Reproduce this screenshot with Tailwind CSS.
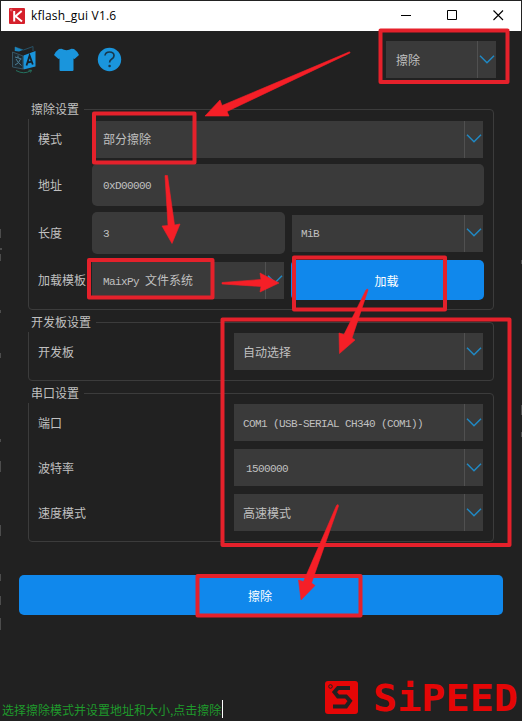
<!DOCTYPE html>
<html lang="zh-CN">
<head>
<meta charset="utf-8">
<title>kflash_gui V1.6</title>
<script src="https://cdn.jsdelivr.net/npm/@tailwindcss/browser@4"></script>
</head>
<body class="bg-[#212121]">
<svg class="hidden">
  <symbol id="chev" viewBox="0 0 16 10"><path d="M1 .7 L8 7.700 L15 .7" fill="none" stroke="#2089c4" stroke-width="1.5"/></symbol>
</svg>
<div class="relative w-[522px] h-[721px] overflow-hidden flex flex-col bg-[#212121] text-[#c0c0c0] text-[12px] leading-[16px] font-['Liberation_Mono','Noto_Sans_CJK_SC',monospace]">

  <!-- title bar -->
  <header class="h-[31px] shrink-0 border-t border-x border-[#222] bg-white flex items-center text-black">
    <svg class="ml-[8px] mb-[1px] w-[16px] h-[16px]" viewBox="0 0 16 16"><rect width="16" height="16" rx="1" fill="#d5202b"/><path d="M5.2 3V13.5M12.7 3L6.5 8.2L13 13.5" fill="none" stroke="#fff" stroke-width="2"/><circle cx="2.2" cy="2" r=".9" fill="none" stroke="#f4a0a4" stroke-width=".6"/></svg>
    <span class="ml-[6px] text-[12px] font-['Open_Sans',sans-serif] tracking-[0.2px] whitespace-nowrap">kflash_gui V1.6</span>
    <div class="ml-auto mr-[17px] mb-[2px] flex items-center gap-[35px]">
      <svg class="w-[11px] h-[11px]" viewBox="0 0 11 11"><path d="M0 5.5H10" stroke="#000"/></svg>
      <svg class="w-[11px] h-[11px]" viewBox="0 0 11 11"><path d="M.5 .5H9.5V9.5H.5Z" fill="none" stroke="#000"/></svg>
      <svg class="w-[11px] h-[11px]" viewBox="0 0 11 11"><path d="M.5 .5L10 10M10 .5L.5 10" stroke="#000" stroke-width="1.1"/></svg>
    </div>
  </header>

  <!-- toolbar -->
  <div class="h-[78px] shrink-0 flex items-start pl-[11px] pr-[26px]">
    <svg class="mt-[14px] w-[26px] h-[29px]" viewBox="0 0 26 29">
      <path d="M4 6V2L12.500 5L22 1.500V6" fill="none" stroke="#28566c" stroke-width=".9"/>
      <path d="M4 2L12 5L8 6.500L4 6Z" fill="#1a84be"/>
      <path d="M1.500 7L12 11V24L1.500 22Z" fill="#1f2a30" stroke="#3d6172" stroke-width=".8"/>
      <path d="M12.500 10.500L24.500 6V21.500L12.500 24.500Z" fill="#1a95dc"/>
      <path d="M4 12L10.500 14M7 10.500V13M9.500 14Q8 18.500 4 20M5 14Q7 18 10.500 20.500" stroke="#4d7e95" fill="none"/>
      <path d="M15.500 20.500L18.600 10.500L21.800 19.500M16.500 17.500L21 16.700" stroke="#16222a" stroke-width="1.800" fill="none"/>
      <path d="M5 25.500Q13 30 20 25.500M17.500 25.200L20.500 25.200L19.500 27.500" stroke="#24725f" fill="none"/>
    </svg>
    <svg class="mt-[17px] ml-[17px] w-[25px] h-[24px]" viewBox="0 0 25 24"><path d="M7.500 .8Q12.500 3.500 17.500 .8L20 1Q23 3 25 7L20.500 11L19.500 10.500V22Q19.500 23 18.500 23H6.500Q5.500 23 5.500 22V10.500L4.500 11L0 7Q2 3 5 1Z" fill="#1a95dc"/></svg>
    <svg class="mt-[16px] ml-[18px] w-[25px] h-[25px]" viewBox="0 0 25 25"><circle cx="12.500" cy="12.500" r="11.700" fill="#1a95dc"/><path d="M8 8.500Q8.500 5 12.500 5Q17 5 17 8.700Q17 10.700 14.500 12.200Q12.600 13.300 12.600 15.500" fill="none" stroke="#17384d" stroke-width="1.700"/><circle cx="12.600" cy="19" r="1.300" fill="#17384d"/></svg>
    <div class="ml-auto mt-[10px] w-[110px] h-[37px] bg-[#3a3a3a] flex items-center">
      <span class="pl-[10px] pt-[4px] flex-1">擦除</span>
      <span class="w-[19px] h-full border-l border-[#505050] flex items-center justify-center"><svg class="w-[16px] h-[10px]"><use href="#chev"/></svg></span>
    </div>
  </div>

  <!-- erase settings -->
  <section class="relative mx-[28px] w-[466px] h-[201px] shrink-0 border border-[#3c3c3c] rounded-[4px] pl-[9px] pr-[9px] pt-[10px]">
    <h2 class="absolute left-[-1px] top-[-9px] h-[18px] bg-[#212121] pl-[3px] pr-[5px] pt-[2px]">擦除设置</h2>
    <div class="h-[38px] flex items-center">
      <span class="w-[54px] pt-[3px] shrink-0">模式</span>
      <div class="w-[391px] h-[37px] bg-[#3a3a3a] flex items-center"><span class="pl-[11px] pt-[4px] flex-1">部分擦除</span><span class="w-[19px] h-full border-l border-[#505050] flex items-center justify-center"><svg class="w-[16px] h-[10px]"><use href="#chev"/></svg></span></div>
    </div>
    <div class="mt-[6px] h-[42px] flex items-center">
      <span class="w-[54px] pt-[3px] shrink-0">地址</span>
      <div class="w-[392px] h-[42px] rounded-[5px] bg-[#3a3a3a] flex items-center pl-[11px] pt-[1px] text-[11px] tracking-[-0.6px]">0xD00000</div>
    </div>
    <div class="mt-[6px] h-[42px] flex items-center">
      <span class="w-[54px] pt-[3px] shrink-0">长度</span>
      <div class="w-[193px] h-[42px] rounded-[5px] bg-[#3a3a3a] flex items-center pl-[11px] pt-[1px] text-[11px]">3</div>
      <div class="ml-[7px] w-[191px] h-[37px] bg-[#3a3a3a] flex items-center"><span class="pl-[9px] pt-[2px] flex-1 text-[11px] tracking-[-0.6px]">MiB</span><span class="w-[19px] h-full border-l border-[#505050] flex items-center justify-center"><svg class="w-[16px] h-[10px]"><use href="#chev"/></svg></span></div>
    </div>
    <div class="mt-[6px] h-[40px] flex items-center">
      <span class="w-[54px] pt-[4px] shrink-0 whitespace-nowrap">加载模板</span>
      <div class="w-[192px] h-[37px] bg-[#3a3a3a] flex items-center"><span class="pl-[11px] pt-[4px] flex-1 whitespace-nowrap"><span class="text-[11px] tracking-[-0.6px]">MaixPy </span>文件系统</span><span class="w-[19px] h-full border-l border-[#505050] flex items-center justify-center"><svg class="w-[16px] h-[10px]"><use href="#chev"/></svg></span></div>
      <button class="ml-[7px] w-[193px] h-[40px] rounded-[5px] bg-[#1088ec] text-white pt-[5px] pr-[2px]">加载</button>
    </div>
  </section>

  <!-- board settings -->
  <section class="relative mt-[12px] mx-[28px] w-[466px] h-[59px] shrink-0 border border-[#3c3c3c] rounded-[4px] px-[9px] pt-[10px]">
    <h2 class="absolute left-[-1px] top-[-9px] h-[18px] bg-[#212121] pl-[3px] pr-[5px] pt-[2px]">开发板设置</h2>
    <div class="h-[37px] flex items-center">
      <span class="w-[196px] pt-[4px] shrink-0">开发板</span>
      <div class="w-[249px] h-[37px] bg-[#3a3a3a] flex items-center"><span class="pl-[9px] pt-[4px] flex-1">自动选择</span><span class="w-[19px] h-full border-l border-[#505050] flex items-center justify-center"><svg class="w-[16px] h-[10px]"><use href="#chev"/></svg></span></div>
    </div>
  </section>

  <!-- serial settings -->
  <section class="relative mt-[12px] mx-[28px] w-[466px] h-[149px] shrink-0 border border-[#3c3c3c] rounded-[4px] px-[9px] pt-[10px] flex flex-col gap-[8px]">
    <h2 class="absolute left-[-1px] top-[-9px] h-[18px] bg-[#212121] pl-[3px] pr-[5px] pt-[2px]">串口设置</h2>
    <div class="h-[37px] flex items-center">
      <span class="w-[196px] pt-[4px] shrink-0">端口</span>
      <div class="w-[249px] h-[37px] bg-[#3a3a3a] flex items-center"><span class="pl-[9px] pt-[2px] flex-1 text-[11px] tracking-[-0.6px] whitespace-nowrap">COM1 (USB-SERIAL CH340 (COM1))</span><span class="w-[19px] h-full border-l border-[#505050] flex items-center justify-center"><svg class="w-[16px] h-[10px]"><use href="#chev"/></svg></span></div>
    </div>
    <div class="h-[37px] flex items-center">
      <span class="w-[196px] pt-[4px] shrink-0">波特率</span>
      <div class="w-[249px] h-[37px] bg-[#3a3a3a] flex items-center"><span class="pl-[12px] pt-[2px] flex-1 text-[11px] tracking-[-0.6px]">1500000</span><span class="w-[19px] h-full border-l border-[#505050] flex items-center justify-center"><svg class="w-[16px] h-[10px]"><use href="#chev"/></svg></span></div>
    </div>
    <div class="h-[37px] flex items-center">
      <span class="w-[196px] pt-[4px] shrink-0">速度模式</span>
      <div class="w-[249px] h-[37px] bg-[#3a3a3a] flex items-center"><span class="pl-[9px] pt-[4px] flex-1">高速模式</span><span class="w-[19px] h-full border-l border-[#505050] flex items-center justify-center"><svg class="w-[16px] h-[10px]"><use href="#chev"/></svg></span></div>
    </div>
  </section>

  <button class="mt-[33px] ml-[19px] w-[484px] h-[40px] shrink-0 rounded-[5px] bg-[#1088ec] text-white pt-[5px] pr-[2px]">擦除</button>

  <!-- status bar and logo -->
  <footer class="flex-1 flex items-end">
    <span class="ml-[2px] mb-[3px] h-[18px] pt-[2px] pr-[1px] border-r border-white text-[#1f9a2c] whitespace-nowrap font-['Noto_Sans_CJK_SC',sans-serif]">选择擦除模式并设置地址和大小,点击擦除</span>
    <svg class="ml-auto mr-[2px] w-[196px] h-[46px] overflow-visible" viewBox="0 -4 196 46">
      <rect x="1" y="2" width="33" height="33" rx="3" fill="#e50606"/>
      <path d="M26 9H14L10.500 13L14 17.500H22L26 22L22 27.500H9" fill="none" stroke="#212121" stroke-width="4"/>
      <circle cx="6.500" cy="7.500" r="1.800" fill="none" stroke="#212121"/>
      <text x="49" y="32" textLength="145" lengthAdjust="spacingAndGlyphs" font-family="DejaVu Sans Mono" font-weight="bold" font-size="37" fill="#e50606">SiPEED</text>
    </svg>
  </footer>

  <!-- annotations over the window -->
  <svg class="absolute inset-0 w-[522px] h-[721px] pointer-events-none" viewBox="0 0 522 721">
    <g fill="none" stroke="#e5212b" stroke-width="4" stroke-linejoin="round">
      <rect x="380.500" y="30.500" width="127" height="51.500"/>
      <rect x="94" y="113.500" width="100.500" height="49"/>
      <rect x="89" y="260" width="123.500" height="37.500"/>
      <rect x="294" y="257.500" width="151" height="52"/>
      <rect x="222.500" y="319.500" width="287" height="225.500"/>
      <rect x="197.500" y="576" width="163" height="39.500"/>
    </g>
    <g fill="#f51f27" stroke="#f51f27" stroke-width=".6" stroke-linejoin="round">
      <path d="M350 52.300L349.600 53.200L227 111.500L229 116L205 116L220 100L222 105.500L349.500 51.800Z"/>
      <path d="M165 175.500L167.500 175.500L174.500 225L180 224L172 243.500L162 226L168 225.500Z"/>
      <path d="M222 282.500L261 279.500L260 273L279 283L260 292L261 286.500L222 284Z"/>
      <path d="M367.500 289L368 290L352 338L355 340L339.500 353.500L339 333L344 334.500L366 290Z"/>
      <path d="M338 504.500L338.500 506L311.500 583L315 585.500L301 600L298.500 580L303.500 581.500L336.500 505.500Z"/>
    </g>
    <g fill="#4c4c4c">
      <path d="M0 229h1v9h-1zM0 248h2v2h-2zM0 254h1v7h-1zM0 310h1v3h-1zM0 353h1v5h-1zM0 439h1v3h-1zM0 461h1v11h-1zM0 525h1v11h-1zM0 574h1v7h-1zM0 596h1v9h-1zM0 618h1v12h-1zM521 260h1v4h-1zM521 405h1v10h-1zM521 432h1v5h-1z"/>
    </g>
  </svg>
</div>
</body>
</html>
